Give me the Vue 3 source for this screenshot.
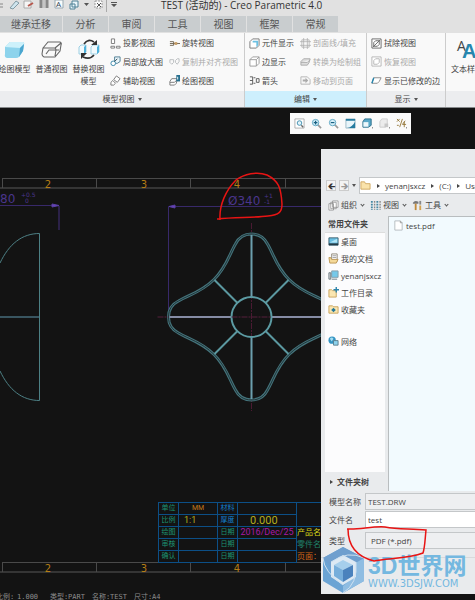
<script setup>
import { ref } from 'vue'

const tabs = ['继承迁移', '分析', '审阅', '工具', '视图', '框架', '常规']

const bigTools = [
  { icon: 'solid', text: '绘图模型' },
  { icon: 'wire', text: '普通视图' },
  { icon: 'swap', text: '替换视图模型' }
]
const viewTools = [
  { icon: 'proj', text: '投影视图' },
  { icon: 'rotate', text: '旋转视图' },
  { icon: 'detail', text: '局部放大图' },
  { icon: 'copy', text: '复制并对齐视图', off: true },
  { icon: 'aux', text: '辅助视图' },
  { icon: 'draw', text: '绘图视图' }
]
const editTools = [
  { icon: 'comp', text: '元件显示' },
  { icon: 'hatch', text: '剖面线/填充', off: true },
  { icon: 'edge', text: '边显示' },
  { icon: 'convert', text: '转换为绘制组', off: true },
  { icon: 'arrows', text: '箭头' },
  { icon: 'move', text: '移动到页面', off: true }
]
const showTools = [
  { icon: 'erase', text: '拭除视图' },
  { icon: 'restore', text: '恢复视图', off: true },
  { icon: 'modified', text: '显示已修改的边' }
]
const viewBar = ['fit', 'zoomin', 'zoomout', 'repaint', 'style', 'saved', 'datum']

const places = [
  { icon: 'desktop', text: '桌面' },
  { icon: 'docs', text: '我的文档' },
  { icon: 'pc', text: 'yenanjsxcz' },
  { icon: 'work', text: '工作目录' },
  { icon: 'fav', text: '收藏夹' },
  { icon: 'net', text: '网络', gap: true }
]

const marks = [
  { n: 2, x: 48 },
  { n: 3, x: 144 },
  { n: 4, x: 237 }
]
const ticks = [2, 96, 190, 285]

const modelName = ref('TEST.DRW')
const fileName = ref('test')
const type = ref('pdf')
</script>

<template>
  <svg class="defs" aria-hidden="true">
    <symbol id="solid" viewBox="0 0 22 18">
      <path d="M1 7 L6 2 H19 Q21 3 20 5 L19 11 L15 17 Q14 18 12 18 H3 Q0 17 1 14 Z" fill="#8dd3ec" />
      <path d="M1 7 L6 2 H19 Q21 3 20 4 L16 8 Z" fill="#cdf1fb" />
      <path d="M16 8 L20 4 L19 11 L15 17 Z" fill="#4ba6cf" />
    </symbol>
    <symbol id="wire" viewBox="0 0 22 18">
      <path d="M2 8 L7 2 H19 Q21 3 20 5 L19 11 L14 17 H3 Q1 16 1 14 Z M2 8 H13 Q15 8 15 10 L14 16 M14 8 L20 3 M5 14 L8 10 H18" fill="none" stroke="#666" stroke-width="1.1" />
    </symbol>
    <symbol id="swap" viewBox="0 0 22 20">
      <path d="M1 8 L3 6 H8 V13 L6 15 H1 Z M13 8 L15 6 H21 V13 L19 15 H13 Z" fill="#f2fafd" stroke="#9ccfe3" />
      <path d="M8 6 V13 L6 15 V8 Z M21 6 V13 L19 15 V8 Z" fill="#4fb2db" />
      <path d="M6 5 Q10 -1 16 3 M16 16 Q12 21 5 18" fill="none" stroke="#333" stroke-width="1.6" />
      <path d="M19 1 V6 H13 Z M3 20 V14 H9 Z" fill="#333" />
    </symbol>
    <symbol id="proj" viewBox="0 0 12 12">
      <path d="M1.500 1 H5 V6 H1.500 Z M1 9 H5 V11 H1 Z M7 9 H11 V11 H7 Z" fill="#fff" stroke="#777" />
    </symbol>
    <symbol id="rotate" viewBox="0 0 12 12">
      <path d="M1 4 H5 V8 H1 M1 6 H12" fill="none" stroke="#6d6250" /><path d="M6 4.500 H9 V7.500 H6 Z" fill="#c59b63" />
    </symbol>
    <symbol id="detail" viewBox="0 0 12 12">
      <path d="M5 1 H11 V6 L8 8 H5 Z" fill="#eaf6fb" stroke="#4b7b91" /><circle cx="3.500" cy="8" r="2.500" fill="#fff" stroke="#3485a9" /><path d="M5 6 L8 3" stroke="#2c3e46" />
    </symbol>
    <symbol id="copy" viewBox="0 0 12 12">
      <path d="M1 4 H5 V7 L3 9 L1 7 Z M7 5 L9 3 H11 V6 L9 9 L7 7 Z" fill="none" stroke="#b9bcbe" />
    </symbol>
    <symbol id="aux" viewBox="0 0 12 12">
      <path d="M7 1 L11 4 L8 8 L4 5 Z M1 8 L3 6 L6 9 L4 11 H1 Z" fill="#fff" stroke="#777" />
    </symbol>
    <symbol id="draw" viewBox="0 0 12 12">
      <path d="M1 7 L3 4 H9 L8 9 L6 11 H1 Z M1 8 H6 L9 5" fill="#fff" stroke="#777" /><path d="M8 0 H12 V7 H8 Z" fill="#26708f" /><path d="M9 2 H10 V5 H9 Z" fill="#fff" />
    </symbol>
    <symbol id="comp" viewBox="0 0 12 12">
      <path d="M1 4 L4 1 H11 V8 L8 11 H1 Z" fill="#fff" stroke="#777" /><path d="M4 3 H10 V8 L8 10 V5 H4 Z" fill="#6cc0e2" />
    </symbol>
    <symbol id="edge" viewBox="0 0 12 12">
      <path d="M1 4 L4 1 H11 V8 L8 11 H1 Z M1 4 H8 V11 M8 4 L11 1" fill="#fff" stroke="#999" />
    </symbol>
    <symbol id="arrows" viewBox="0 0 12 12">
      <path d="M1 2 H4 V10 H1 M1 6 H4 M8 4 H11 V8 H8 Z M5 3 H7 M5 9 H7" fill="none" stroke="#555" />
    </symbol>
    <symbol id="hatch" viewBox="0 0 12 12">
      <path d="M2 2 H10 V10 H2 Z M0 4 H12 M0 8 H12 M4 0 V12 M8 0 V12" fill="none" stroke="#aaa" stroke-width=".8" />
    </symbol>
    <symbol id="convert" viewBox="0 0 12 12">
      <path d="M1 6 L4 3 H11 L10 7 L8 10 H1 Z M1 7 H8 L11 4" fill="#ddd" stroke="#aaa" />
    </symbol>
    <symbol id="move" viewBox="0 0 12 12">
      <path d="M1 2 H8 L11 5 V10 H1 Z" fill="#f7f7f7" stroke="#b5b5b5" /><path d="M3 5 H6 V3 L9 6 L6 9 V7 H3 Z" fill="#aaa" />
    </symbol>
    <symbol id="erase" viewBox="0 0 12 12">
      <path d="M1 1 H11 V11 H1 Z M3 5 L5 3 H9 V7 L7 9 H3 Z M2 10 L10 2" fill="#fff" stroke="#666" />
    </symbol>
    <symbol id="restore" viewBox="0 0 12 12">
      <path d="M1 1 H11 V11 H1 Z M3 5 L5 3 H9 V7 L7 9 H3 Z" fill="#fff" stroke="#b5b5b5" />
    </symbol>
    <symbol id="modified" viewBox="0 0 12 12">
      <path d="M1 9 L3 3 H11 L9 7 L7 9 Z" fill="#fff" stroke="#888" /><path d="M1 9 L3 3" stroke="#2786ad" stroke-width="1.500" />
    </symbol>
    <symbol id="fit" viewBox="0 0 12 12">
      <path d="M1 1 H11 V11 H1 Z" fill="#fff" stroke="#999" stroke-width=".8" /><circle cx="6" cy="5.500" r="2.500" fill="#e1f3fa" stroke="#3e8dad" /><path d="M8 8 L10 10" stroke="#666" stroke-width="1.500" />
    </symbol>
    <symbol id="zoomin" viewBox="0 0 12 12">
      <path d="M7 7 L11 11" stroke="#999" stroke-width="1.800" /><circle cx="5" cy="5" r="3.500" fill="#d5eef8" stroke="#5aa5c3" /><path d="M3 5 H7 M5 3 V7" stroke="#175f80" stroke-width="1.300" />
    </symbol>
    <symbol id="zoomout" viewBox="0 0 12 12">
      <path d="M7 7 L11 11" stroke="#999" stroke-width="1.800" /><circle cx="5" cy="5" r="3.500" fill="#d5eef8" stroke="#5aa5c3" /><path d="M3 5 H7" stroke="#175f80" stroke-width="1.300" />
    </symbol>
    <symbol id="repaint" viewBox="0 0 12 12">
      <path d="M1 1 H11 V11 H1 Z" fill="#e8f5fa" stroke="#8ab" stroke-width=".8" /><path d="M1 3 V1 H11 V3 Z M11 4 V11 H2 Q8 10 11 4 Z" fill="#257b9f" />
    </symbol>
    <symbol id="style" viewBox="0 0 12 12">
      <path d="M1 4 L3 1 H10 V8 L7 10 H1 Z" fill="#5aa9c9" stroke="#276b88" /><path d="M1.500 4.500 H7 V9.500 H1.500 Z" fill="#eef8fc" /><path d="M11 10 H12 L11 12 Z" fill="#444" />
    </symbol>
    <symbol id="saved" viewBox="0 0 12 12">
      <path d="M1 4 L3 1 H9 V8 L7 10 H1 Z" fill="#ececec" stroke="#ccc" /><path d="M6 6 H10 V10 H6 Z" fill="#c8c8c8" /><path d="M11 10 H12 L11 12 Z" fill="#444" />
    </symbol>
    <symbol id="datum" viewBox="0 0 12 12">
      <path d="M1 1 L4 4 M4 1 L1 4 M7 1 L4 10 M10 3 L7 7 M7 7 H11 M9 4 V10 M1 8 H3" stroke="#96783b" fill="none" /><path d="M11 10 H12 L11 12 Z" fill="#444" />
    </symbol>
    <symbol id="desktop" viewBox="0 0 12 12">
      <path d="M1 2 H11 V10 H1 Z" fill="#69bfe3" stroke="#3d6070" /><path d="M1 9 H11" stroke="#253b46" stroke-width="2" /><path d="M2 7 L10 3 V7 Z" fill="#b2e4f5" />
    </symbol>
    <symbol id="docs" viewBox="0 0 12 12">
      <path d="M4 1 H10 V9 H4 Z" fill="#fff" stroke="#8d8576" /><path d="M5 3 H9 M5 5 H9" stroke="#999" /><path d="M1 5 H3 L4 7 H11 L9 11 H2 Z" fill="#f4d999" stroke="#bb9652" />
    </symbol>
    <symbol id="pc" viewBox="0 0 12 12">
      <path d="M4 1 H11 V8 H4 Z" fill="#75c9ea" stroke="#839da8" /><path d="M1 3 H3 V10 H1 Z M4 10 H10" fill="#ddd" stroke="#65757d" />
    </symbol>
    <symbol id="work" viewBox="0 0 12 12">
      <path d="M1 3 H4 L5 4 H9 V11 H1 Z" fill="#fae6b1" stroke="#c8a35c" /><path d="M9 0 V6 M6 3 H12" stroke="#2c83a9" stroke-width="1.500" />
    </symbol>
    <symbol id="fav" viewBox="0 0 12 12">
      <path d="M1 2 H5 L6 3 H11 V10 H1 Z" fill="#fae6b1" stroke="#c8a35c" /><path d="M6 4 L8.500 6.500 L6 9 L3.500 6.500 Z" fill="#267798" />
    </symbol>
    <symbol id="net" viewBox="0 0 12 12">
      <circle cx="4.500" cy="4.500" r="4" fill="#3394c3" /><path d="M2 3 Q4 0 6 3 L4 6 Z" fill="#a5ddf1" /><path d="M6 5 H11 V10 H6 Z" fill="#8dd2ed" stroke="#5c7f8d" />
    </symbol>
    <symbol id="folder" viewBox="0 0 12 12">
      <path d="M1 2 H5 L6 4 H11 V10 H1 Z" fill="#fae3ab" stroke="#cfa763" />
    </symbol>
    <symbol id="page" viewBox="0 0 12 12">
      <path d="M2 1 H8 L10 3 V11 H2 Z" fill="#fff" stroke="#b4babe" /><path d="M8 1 V3 H10" fill="none" stroke="#999" />
    </symbol>
    <symbol id="stack" viewBox="0 0 12 12">
      <path d="M5 1 H11 V8 H5 Z M3 2.500 H9 V9.500 H3 Z M1 4 H6 V11 H1 Z" fill="#fff" stroke="#888" stroke-width=".8" />
    </symbol>
    <symbol id="grid" viewBox="0 0 12 12">
      <path d="M2 1 V11 M8 1 V11" stroke="#4688a3" stroke-width="2" stroke-dasharray="2 1" /><path d="M5 1 V11 M11 1 V11" stroke="#888" stroke-width="1.500" stroke-dasharray="2 1" />
    </symbol>
    <symbol id="hammer" viewBox="0 0 12 12">
      <path d="M1 3 Q3 0 7 2 V4 H1 Z" fill="#777" /><path d="M4 4 V11" stroke="#c28a3a" stroke-width="2" /><path d="M9 1 V5" stroke="#888" stroke-width="2" /><path d="M9 6 V11" stroke="#d4a34f" stroke-width="2" />
    </symbol>
  </svg>

  <div class="app">
    <header class="titlebar">
      <svg class="quick" width="120" height="12" aria-hidden="true">
        <path d="M0 4 H3 M0 7 H3" stroke="#888" />
        <path d="M10 8 L16 1 L19 3 L13 9 Z" fill="#cfe5ee" stroke="#829aa4" />
        <path d="M24 1 H31 V8 H24 Z" fill="#f5f5f5" stroke="#aaa" /><path d="M28 6 L33 3" stroke="#b6574d" stroke-width="2" />
        <path d="M41 0 V8 M47 0 V8" stroke="#888" stroke-width="3" /><path d="M44 0 V8" stroke="#aaa" />
        <path d="M55 0 H63 V8 H55 Z" fill="#f8fbfc" stroke="#98a9b1" />
        <text x="56" y="7" class="qa">A</text>
        <path d="M72 1 H78 V7 H72 Z M70 4 H75 V9 H70 Z" fill="#e8f4f9" stroke="#4f8196" />
        <path d="M84 3 H89 L86.500 6 Z M111 4 H117 L114 7 Z" fill="#555" />
        <path d="M95 1 H102 V8 H95 Z" fill="#fafafa" stroke="#999" stroke-dasharray="2 1" /><path d="M97 3 L101 7 M101 3 L97 7" stroke="#555" />
        <path d="M106.500 0 V12" stroke="#aaa" /><path d="M111 2.500 H117" stroke="#555" />
      </svg>
      <h1>TEST (活动的) - Creo Parametric 4.0</h1>
    </header>
    <nav class="tabs">
      <button v-for="t in tabs" :key="t">{{ t }}</button>
    </nav>

    <div class="ribbon">
      <section class="group model">
        <div class="tools">
          <button v-for="b in bigTools" :key="b.icon" class="big">
            <svg><use :href="'#' + b.icon" /></svg>
            <span>{{ b.text }}</span>
          </button>
          <div class="small two">
            <button v-for="b in viewTools" :key="b.icon" :disabled="b.off">
              <svg class="ico"><use :href="'#' + b.icon" /></svg>{{ b.text }}
            </button>
          </div>
        </div>
        <footer>模型视图<i class="caret"></i></footer>
      </section>
      <section class="group edit">
        <div class="tools">
          <div class="small two">
            <button v-for="b in editTools" :key="b.icon" :disabled="b.off">
              <svg class="ico"><use :href="'#' + b.icon" /></svg>{{ b.text }}
            </button>
          </div>
        </div>
        <footer>编辑<i class="caret"></i></footer>
      </section>
      <section class="group show">
        <div class="tools">
          <div class="small">
            <button v-for="b in showTools" :key="b.icon" :disabled="b.off">
              <svg class="ico"><use :href="'#' + b.icon" /></svg>{{ b.text }}
            </button>
          </div>
        </div>
        <footer>显示<i class="caret"></i></footer>
      </section>
      <section class="group format">
        <div class="tools">
          <button class="big">
            <b class="aa"><span>A</span><span>A</span></b>
            <span>文本样式</span>
          </button>
        </div>
        <footer></footer>
      </section>
    </div>

    <main class="canvas">
      <!-- sheet is drawn in window coordinates, shifted up by the ribbon height -->
      <svg class="sheet" width="100%" height="100%">
        <g transform="translate(0 -108)">
          <g v-for="y in [178, 562]" :key="y" stroke="#4a4a4a">
            <path :d="`M2 ${y + 0.5} H1600`" />
            <path :d="`M0 ${y + 10} H1600`" stroke="#353535" stroke-width="2" />
            <path v-for="x in ticks" :key="x" :d="`M${x + 0.5} ${y} V${y + 10}`" />
          </g>
          <g class="mark">
            <template v-for="m in marks" :key="m.n">
              <text :x="m.x" y="188">{{ m.n }}</text>
              <text :x="m.x" y="572">{{ m.n }}</text>
            </template>
          </g>

          <g fill="none" stroke="#38296a">
            <path d="M0 205.500 H59" />
            <path d="M59 206 V230" stroke="#2b2148" stroke-width="2" />
            <path d="M168.500 317 V206.500 H1600" />
            <path d="M59 205.500 L52 204 V207 Z M169 206.500 L175 205 V208 Z" fill="#6744b4" stroke="#5a3fa5" />
          </g>
          <g class="dim">
            <text x="0" y="203">80</text>
            <text x="21" y="197" class="tol">+0.5</text>
            <text x="25" y="203" class="tol">0</text>
            <text x="228" y="205">Ø340</text>
            <text x="264" y="198" class="tol">+1</text>
            <text x="264" y="204" class="tol">-1</text>
          </g>

          <g fill="none" stroke="#4d8085">
            <path d="M0 263 C9 244 22 233.500 39.500 233.500 V400.500 C22 400.500 9 390 0 371" />
            <path d="M0 317 H39" stroke="#395560" stroke-width="2" />
          </g>

          <g transform="translate(251.500 317)" fill="none">
            <path d="M0 -94 V94" stroke="#4a1a32" stroke-dasharray="6 1 2 1" />
            <g v-for="a in [0, 90, 180, 270]" :key="a" :transform="`rotate(${a})`">
              <path class="rim" d="M0 -83 C-8 -83 -13 -79 -16 -73 C-22 -63 -25 -50 -37.500 -37.500 C-50 -25 -63 -22 -73 -16 C-79 -13 -83 -8 -83 0" />
              <path class="rim in" d="M0 -83 C-8 -83 -13 -79 -16 -73 C-22 -63 -25 -50 -37.500 -37.500 C-50 -25 -63 -22 -73 -16 C-79 -13 -83 -8 -83 0" />
              <path d="M-14 -14 L-37 -37" stroke="#5b98a0" stroke-width="2" />
            </g>
            <path d="M0 -82 V-20 M0 20 V82" stroke="#6c9fae" stroke-width="2" />
            <path d="M-82 0 H-20 M20 0 H82" stroke="#868ca5" stroke-width="2" />
            <circle r="20" stroke="#5c9ba3" stroke-width="2" />
            <path d="M-94 0 H-83 M-20 0 H20" stroke="#56203c" stroke-dasharray="6 1 2 1" />
          </g>

          <path class="pen" d="M217 219 C236 217 253 218 268 216 C279 215 282 212 282 204 C281 188 279 181 267 175 C257 171 244 174 236 180 C226 190 219 205 220 220" />

          <g class="status">
            <text x="-4" y="599">比例:</text><text x="17" y="599">1.000</text>
            <text x="50" y="599">类型:</text><text x="68" y="599">PART</text>
            <text x="92" y="599">名称:</text><text x="110" y="599">TEST</text>
            <text x="134" y="599">尺寸:</text><text x="152" y="599">A4</text>
          </g>
        </g>
      </svg>

      <table class="block">
        <colgroup><col class="c20"><col class="c39"><col class="c20"><col class="c59"><col class="c59"></colgroup>
        <tbody>
          <tr><th>单位</th><td class="orange">MM</td><th class="blue">材料</th><td></td><td rowspan="2"></td></tr>
          <tr><th>比例</th><td class="yellow left">1:1</td><th class="blue">厚度</th><td class="yellow wide">0.000</td></tr>
          <tr><th>绘图</th><td></td><th>日期</th><td class="pink">2016/Dec/25</td><td class="last bright">产品名称</td></tr>
          <tr><th>审核</th><td></td><th>日期</th><td></td><td class="last green">零件名称</td></tr>
          <tr><th>确认</th><td></td><th>日期</th><td></td><td class="last red">页面：</td></tr>
        </tbody>
      </table>

      <div class="viewbar">
        <button v-for="v in viewBar" :key="v" :aria-label="v"><svg class="ico"><use :href="'#' + v" /></svg></button>
      </div>

      <form class="dialog" @submit.prevent>
        <div class="nav">
          <button type="button" class="go" aria-label="back">🡰</button>
          <button type="button" class="go" disabled aria-label="forward">🡲</button>
          <i class="caret"></i>
          <div class="path">
            <svg class="ico"><use href="#folder" /></svg>
            <i class="right"></i><a href="#">yenanjsxcz</a>
            <i class="right"></i><a href="#">(C:)</a>
            <i class="right"></i><a href="#">Users</a>
          </div>
        </div>
        <div class="menu">
          <button type="button"><svg class="ico"><use href="#stack" /></svg>组织<i class="chev"></i></button>
          <button type="button"><svg class="ico"><use href="#grid" /></svg>视图<i class="chev"></i></button>
          <button type="button"><svg class="ico"><use href="#hammer" /></svg>工具<i class="chev"></i></button>
        </div>
        <div class="browser">
          <div class="side">
            <div class="places">
              <h2>常用文件夹</h2>
              <ul>
                <li v-for="p in places" :key="p.icon" :class="{ gap: p.gap }">
                  <a href="#"><svg class="ico"><use :href="'#' + p.icon" /></svg>{{ p.text }}</a>
                </li>
              </ul>
            </div>
            <button type="button" class="tree"><i class="right"></i>文件夹树</button>
          </div>
          <div class="files">
            <a href="#"><svg class="ico"><use href="#page" /></svg>test.pdf</a>
          </div>
        </div>
        <div class="fields">
          <label for="model">模型名称</label>
          <input id="model" v-model="modelName" class="grey" readonly>
          <label for="file">文件名</label>
          <input id="file" v-model="fileName">
          <label for="type" class="kind">类型</label>
          <select id="type" v-model="type" class="grey kind">
            <option value="pdf">PDF (*.pdf)</option>
          </select>
        </div>
        <div class="foot"></div>

        <div class="brand">
          <svg width="43" height="48" viewBox="0 0 43 48">
            <path d="M21 1 L42 12 V35 L21 47 L1 35 V12 Z" fill="#6ba4d4" />
            <path d="M21 1 L42 12 L31 18 L21 12 L11 18 V24 L1 12 Z" fill="#6f9fce" />
            <path d="M42 12 V35 L21 47 V40 L32 31 V18 Z" fill="#8fbde2" />
            <path d="M21 9 L34 16 V31 L21 39 L9 31 V16 Z" fill="#dde9f3" />
            <path d="M21 14 L31 19 L21 24 L12 19 Z" fill="#a6cfec" />
            <path d="M12 19 L21 24 V36 L12 30 Z" fill="#76aedb" />
            <path d="M31 19 L21 24 V36 L31 30 Z" fill="#4a82bd" />
            <path d="M1 12 Q2 26 21 39 M42 12 Q26 4 9 16 M21 47 Q36 38 34 16" fill="none" stroke="#cfe1f0" />
          </svg>
          <p><strong>3D世界网</strong><small>WWW.3DSJW.COM</small></p>
        </div>
        <svg class="ring" width="84" height="38" aria-hidden="true">
          <path class="pen" d="M2 4 C14 5 27 1 40 2 C54 5 67 3 81 5 C80 14 80 22 78 28 C63 34 41 33 29 36 C13 32 3 22 3 4" />
        </svg>
      </form>
    </main>
  </div>
</template>

<style>
body {
  margin: 0;
  background: #131313;
}
</style>

<style scoped>
.defs {
  position: absolute;
  width: 0;
  height: 0;
}
.app {
  display: flex;
  flex-direction: column;
  min-height: 100vh;
  overflow: hidden;
  font: 8px/12px "Open Sans", "Noto Sans CJK SC", sans-serif;
  color: #444;
  background: #131313;
}
button, input, select {
  font: inherit;
  color: inherit;
  margin: 0;
  padding: 0;
  border: 0;
  background: none;
  border-radius: 0;
}
button {
  white-space: nowrap;
}
a {
  color: inherit;
  text-decoration: none;
}
.ico {
  width: 11px;
  height: 11px;
  flex: none;
}
.titlebar {
  display: flex;
  gap: 41px;
  height: 16px;
  background: #e1e1e1;
}
.titlebar h1 {
  margin: 0;
  font-size: 10px;
  line-height: 10px;
  font-weight: 400;
  color: #333;
  white-space: nowrap;
}
.quick {
  flex: none;
}
.qa {
  font: 8px "Open Sans", sans-serif;
  fill: #345;
}
.tabs {
  display: flex;
  gap: 1px;
  height: 17px;
  background: #e1e1e1;
}
.tabs button {
  width: 45px;
  height: 16px;
  font-size: 10px;
  line-height: 16px;
  color: #555;
  background: #c9cdcf;
}
.tabs button:first-child {
  width: 62px;
}
.ribbon {
  display: flex;
  height: 74px;
  background: #f9f9f9;
  border-bottom: 1px solid #85888a;
}
.group {
  flex: none;
  box-sizing: border-box;
  display: flex;
  flex-direction: column;
  border-right: 1px solid #ccc;
}
.model { width: 245px; }
.edit { width: 122px; }
.show { width: 79px; }
.format {
  flex: 1 0 28px;
  border: 0;
}
.group footer {
  height: 16px;
  display: flex;
  align-items: center;
  justify-content: center;
  gap: 3px;
  background: #ecedef;
}
.edit footer {
  background: #cdeffd;
}
.tools {
  flex: 1;
  display: flex;
}
.model .tools {
  margin-left: -4px;
}
.edit .tools, .show .tools {
  padding-left: 4px;
}
.big {
  width: 37px;
  display: flex;
  flex-direction: column;
  align-items: center;
  padding-top: 6px;
  white-space: normal;
}
.big svg {
  width: 22px;
  height: 20px;
  margin-bottom: 4px;
}
.big span {
  width: 32px;
}
.caret {
  width: 0;
  border: 2px solid transparent;
  border-top: 3px solid #555;
  border-bottom: 0;
}
.small {
  display: grid;
  grid-template-rows: repeat(3, 1fr);
  padding: 1px 0;
}
.two {
  grid-template-columns: 59px auto;
}
.model .small {
  padding-left: 3px;
}
.edit .two {
  grid-template-columns: 51px auto;
}
.small button {
  display: flex;
  align-items: center;
  gap: 2px;
}
.small button:disabled {
  color: #aaa;
}
.format .big {
  white-space: nowrap;
  align-items: flex-start;
  padding-left: 5px;
}
.big .aa {
  display: flex;
  height: 20px;
  margin-bottom: 4px;
  padding-left: 6px;
  font: 14px/14px "Open Sans", sans-serif;
}
.big .aa span {
  width: 5px;
}
.big .aa span + span {
  color: #2686ad;
  font: bold 20px/24px "Liberation Sans", sans-serif;
}
.canvas {
  position: relative;
  flex: 1;
  overflow: hidden;
}
.sheet {
  position: absolute;
  inset: 0;
}
.mark text {
  font: 10px "DejaVu Sans", sans-serif;
  fill: #b57d15;
  text-anchor: middle;
}
.dim text {
  font: 12px "DejaVu Sans", sans-serif;
  fill: #4a358c;
}
.dim .tol {
  font-size: 6px;
}
.rim {
  stroke: #44747c;
  stroke-width: 3;
}
.rim.in {
  stroke: #223438;
  stroke-width: 1;
}
.pen {
  fill: none;
  stroke: #e81414;
  stroke-width: 1.5;
}
.status text {
  font: 7px "DejaVu Sans Mono", "Noto Sans CJK SC", monospace;
  fill: #8c8c8c;
}
.block {
  position: absolute;
  left: 158px;
  top: 394px;
  width: 198px;
  table-layout: fixed;
  border-collapse: collapse;
  font: 9px/11px Roboto, "Noto Sans CJK SC", sans-serif;
}
.c20 { width: 20px; }
.c39 { width: 39px; }
.c59 { width: 59px; }
.block th, .block td {
  height: 11px;
  padding: 0;
  border: 1px solid #0c4f86;
  text-align: center;
  white-space: nowrap;
  overflow: hidden;
}
.block th {
  font-size: 7px;
  font-weight: 400;
  color: #1d9270;
}
.block th.blue { color: #1480d0; }
.block .orange {
  font-size: 7px;
  color: #c47a18;
}
.yellow { color: #b5ad1c; }
.block .left {
  text-align: left;
  padding-left: 5px;
}
.block .wide {
  font-size: 11px;
  text-align: left;
  padding-left: 12px;
}
.pink { color: #a819a5; }
.block .last {
  border-top: 0;
  border-bottom: 0;
  text-align: left;
  font-size: 8px;
}
.block tr:nth-child(3) .last {
  border-top: 1px solid #131313;
}
.bright { color: #d8d416; }
.green { color: #20826b; }
.red { color: #d16516; }
.viewbar {
  position: absolute;
  left: 290px;
  top: 5px;
  height: 21px;
  display: flex;
  align-items: center;
  padding: 0 1px;
  background: #fafafa;
}
.viewbar button {
  width: 17px;
  height: 14px;
  display: grid;
  place-items: center;
}
.dialog {
  position: absolute;
  left: 321px;
  right: 0;
  top: 41px;
  bottom: 6px;
  display: flex;
  flex-direction: column;
  padding-top: 28px;
  box-sizing: border-box;
  background: #e9ebed;
}
.nav {
  height: 17px;
  display: flex;
  align-items: center;
  gap: 3px;
  padding-left: 5px;
}
.go {
  width: 10px;
  height: 11px;
  font: bold 9px/8px "DejaVu Sans", sans-serif;
  color: #333;
  border: 1px solid #ccc;
  background: #f3f3f3;
}
.go:disabled {
  color: #999;
}
.path {
  flex: 1;
  height: 17px;
  box-sizing: border-box;
  display: flex;
  align-items: center;
  gap: 6px;
  border: 1px solid #c4c7c9;
  border-right: 0;
  background: #fff;
  overflow: hidden;
}
.right {
  flex: none;
  border: 2px solid transparent;
  border-left: 3px solid #444;
  border-right: 0;
}
.path .right {
  margin-right: -1px;
}
.menu {
  height: 22px;
  display: flex;
  align-items: center;
  gap: 5px;
  padding-left: 7px;
}
.menu button {
  display: flex;
  align-items: center;
  gap: 2px;
}
.chev {
  width: 2px;
  height: 2px;
  margin: 0 1px 2px 2px;
  border: solid #555;
  border-width: 0 1px 1px 0;
  transform: rotate(45deg);
}
.browser {
  flex: 1;
  display: flex;
}
.side {
  width: 67px;
  display: flex;
  flex-direction: column;
}
.places {
  flex: 1;
  margin: 0 3px 0 4px;
  background: #fcfcfd;
}
.places h2 {
  margin: 0;
  padding: 0 3px;
  font-size: 8px;
  line-height: 16px;
  background: #e9ebed;
  border-bottom: 1px solid #ddd;
}
ul {
  margin: 0;
  padding: 0 0 0 3px;
  list-style: none;
}
li {
  height: 17px;
}
li.gap {
  margin-top: 15px;
}
li a, .files a {
  display: flex;
  align-items: center;
  gap: 2px;
  height: 17px;
}
.tree {
  height: 19px;
  display: flex;
  align-items: center;
  gap: 4px;
  padding-left: 9px;
  font-weight: 700;
}
.files {
  flex: 1;
  padding-left: 4px;
  border: 1px solid #b9bdbf;
  border-width: 1px 0 0 1px;
  background: #f2fafe;
}
.fields {
  display: grid;
  grid-template-columns: 36px 1fr;
  align-items: center;
  row-gap: 1px;
  padding: 2px 0 8px 8px;
}
.fields input, .fields select {
  width: 100%;
  height: 17px;
  box-sizing: border-box;
  padding-left: 2px;
  border: 1px solid #c4c7c9;
  border-right: 0;
  background: #fff;
}
.fields .grey {
  background: #eeeff1;
}
.fields select {
  appearance: none;
  padding-left: 5px;
}
.fields .kind {
  margin-top: 3px;
}
.foot {
  height: 36px;
  border-top: 1px solid #d8dadc;
}
.brand {
  position: absolute;
  left: 1px;
  bottom: 0;
  display: flex;
  gap: 3px;
  pointer-events: none;
}
.brand p {
  margin: 0;
  padding-top: 8px;
  color: #74b8e0;
  white-space: nowrap;
}
.brand strong {
  display: block;
  font: bold 23px/24px "Liberation Sans", "Noto Sans CJK SC", sans-serif;
}
.brand small {
  display: block;
  font: 10px/12px "DejaVu Sans", sans-serif;
}
.ring {
  position: absolute;
  left: 24px;
  bottom: 31px;
  pointer-events: none;
}
</style>
